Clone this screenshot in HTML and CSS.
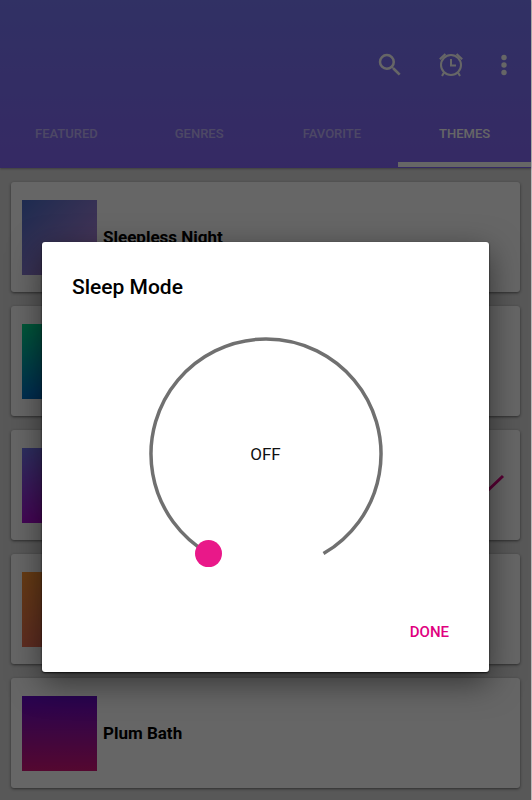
FILE: index.html
```html
<!DOCTYPE html>
<html lang="en">
<head>
  <meta charset="UTF-8" />
  <meta name="viewport" content="width=device-width, initial-scale=1.0"/>
  <title>Sleep Mode</title>
  <link rel="stylesheet" href="styles.css">
</head>
<body>

  <div class="app">
    <header class="header">
      <div class="toolbar">
        <button class="icon-btn search" aria-label="Search">
          <svg width="30" height="30" viewBox="0 0 24 24"><path fill="currentColor" d="M15.5 14h-.79l-.28-.27A6.47 6.47 0 0 0 16 9.5 6.5 6.5 0 1 0 9.5 16c1.61 0 3.09-.59 4.23-1.57l.27.28v.79l5 4.99L20.49 19l-4.99-5zm-6 0a4.5 4.5 0 1 1 0-9 4.5 4.5 0 0 1 0 9z"/></svg>
        </button>
        <button class="icon-btn alarm" aria-label="Sleep timer">
          <svg width="30" height="30" viewBox="0 0 30 30" fill="none" stroke="currentColor" stroke-width="2">
            <circle cx="15" cy="15" r="10"/>
            <path d="M15 9v6.5h5M3.8 9.3L9.4 4M26.2 9.3L20.6 4M8 22.5L6 26M22 22.5L24 26"/>
          </svg>
        </button>
        <button class="icon-btn" aria-label="More options">
          <svg width="30" height="30" viewBox="0 0 30 30" fill="currentColor">
            <circle cx="15" cy="7.500" r="2.700"/><circle cx="15" cy="15" r="2.700"/><circle cx="15" cy="22.500" r="2.700"/>
          </svg>
        </button>
      </div>
      <nav class="tabs">
        <a href="#featured">FEATURED</a>
        <a href="#genres">GENRES</a>
        <a href="#favorite">FAVORITE</a>
        <a href="#themes" class="active">THEMES</a>
      </nav>
    </header>

    <main class="themes">
      <div class="card">
        <div class="swatch night"></div>
        <span class="name">Sleepless Night</span>
      </div>
      <div class="card">
        <div class="swatch ocean"></div>
      </div>
      <div class="card">
        <div class="swatch violet"></div>
        <svg class="check" width="34" height="20" viewBox="0 0 34 20"><path d="M4 14l7 7L32 1" fill="none" stroke="currentColor" stroke-width="3"/></svg>
      </div>
      <div class="card">
        <div class="swatch sunset"></div>
      </div>
      <div class="card">
        <div class="swatch plum"></div>
        <span class="name">Plum Bath</span>
      </div>
    </main>

    <div class="overlay">
      <section class="dialog" role="dialog" aria-labelledby="dialog-title">
        <h1 id="dialog-title">Sleep Mode</h1>
        <div class="dial">
          <svg width="234" height="234" viewBox="0 0 234 234">
            <path class="track" d="M59.500 216.600A115 115 0 1 1 174.500 216.600"/>
            <circle class="thumb" cx="59.500" cy="216.600" r="13.500"/>
          </svg>
          <label class="value" for="sleep" id="value">OFF</label>
          <input type="range" id="sleep" min="0" max="120" step="5" value="0">
        </div>
        <div class="actions">
          <button class="done">DONE</button>
        </div>
      </section>
    </div>
  </div>

  <script>
    const sleep = document.getElementById("sleep");
    const thumb = document.querySelector(".thumb");

    // the track runs 300 degrees clockwise, starting at the lower left
    sleep.addEventListener("input", () => {
      const angle = (120 + 300 * sleep.value / sleep.max) * Math.PI / 180;
      thumb.setAttribute("cx", 117 + 115 * Math.cos(angle));
      thumb.setAttribute("cy", 117 + 115 * Math.sin(angle));
      document.getElementById("value").textContent = sleep.value > 0 ? `${sleep.value} min` : "OFF";
    });
  </script>

</body>
</html>
```

FILE: styles.css
```css
:root {
  --page-color: #dcdcdc;
  --pink: #e91889;
}

* {
  box-sizing: border-box;
}

body {
  margin: 0;
  font-family: Roboto, "Liberation Sans", sans-serif;
  background-color: #b8b8b8;
}

button {
  border: none;
  padding: 0;
  background: none;
  font-family: inherit;
  cursor: pointer;
}

.app {
  position: relative;
  min-height: 100vh;
  margin-right: 1px;
  background-color: var(--page-color);
}

.header {
  display: flex;
  flex-direction: column;
  height: 168px;
  padding-top: 30px;
  background: linear-gradient(#7a7afa, #8668fa);
  box-shadow: 0 1px 2px rgba(0, 0, 0, 0.3);
}

.toolbar {
  display: flex;
  flex: 1;
  align-items: center;
  justify-content: flex-end;
  padding-right: 12px;
}

.icon-btn {
  display: flex;
  color: #fff;
}

.search {
  margin-right: 31px;
}

.alarm {
  margin-right: 23px;
}

.tabs {
  display: grid;
  grid-template-columns: repeat(4, 1fr);
  height: 68px;
}

.tabs a {
  display: flex;
  align-items: center;
  justify-content: center;
  margin-bottom: 1px;
  border-bottom: 5px solid transparent;
  padding-top: 5px;
  color: rgba(255, 255, 255, 0.5);
  font-size: 13px;
  font-weight: 500;
  text-decoration: none;
}

.tabs .active {
  color: #fff;
  border-bottom-color: #fff;
}

.themes {
  display: flex;
  flex-direction: column;
  gap: 14px;
  padding: 14px 11px 12px;
}

.card {
  display: flex;
  align-items: center;
  gap: 6px;
  height: 110px;
  padding: 0 15px 0 11px;
  border-radius: 3px;
  background-color: #fff;
  box-shadow: 0 1px 3px rgba(0, 0, 0, 0.5);
}

.swatch {
  width: 75px;
  height: 75px;
}

.night {
  background: linear-gradient(135deg, #4a6cc8, #c488dc);
}

.ocean {
  background: linear-gradient(160deg, #00dc8c, #0078c8 70%, #0050b4);
}

.violet {
  background: linear-gradient(160deg, #7078f0, #b400d2 85%);
}

.sunset {
  background: linear-gradient(160deg, #ff9632, #e66460);
}

.plum {
  background: linear-gradient(#640ac8, #d21478);
}

.name {
  font-size: 17px;
  font-weight: 700;
  color: #000;
}

.check {
  margin-left: auto;
  overflow: visible;
  color: #dc0082;
}

.overlay {
  position: absolute;
  inset: 0;
  display: flex;
  align-items: center;
  padding: 114px 42px 0;
  background-color: rgba(0, 0, 0, 0.6);
}

.dialog {
  flex: 1;
  padding: 30px 30px 25px;
  border-radius: 3px;
  background-color: #fff;
  box-shadow: 0 1px 2px rgba(0, 0, 0, 0.8), 0 10px 32px rgba(0, 0, 0, 0.5);
}

.dialog h1 {
  margin: 0 0 34px;
  font-size: 21px;
  font-weight: 500;
  line-height: 31px;
  color: #000;
}

.dial {
  display: grid;
  place-items: center;
}

.dial > * {
  grid-area: 1 / 1;
}

.dial svg {
  overflow: visible;
}

.track {
  fill: none;
  stroke: #707070;
  stroke-width: 3.500;
}

.thumb {
  fill: var(--pink);
}

.value {
  font-size: 17px;
  color: #111;
}

.dial input {
  width: 234px;
  height: 234px;
  margin: 0;
  opacity: 0;
  cursor: pointer;
}

.actions {
  display: flex;
  justify-content: flex-end;
  margin-top: 46px;
}

.done {
  padding: 0 10px;
  color: #e0007f;
  font-size: 15px;
  font-weight: 500;
  line-height: 30px;
}
```
